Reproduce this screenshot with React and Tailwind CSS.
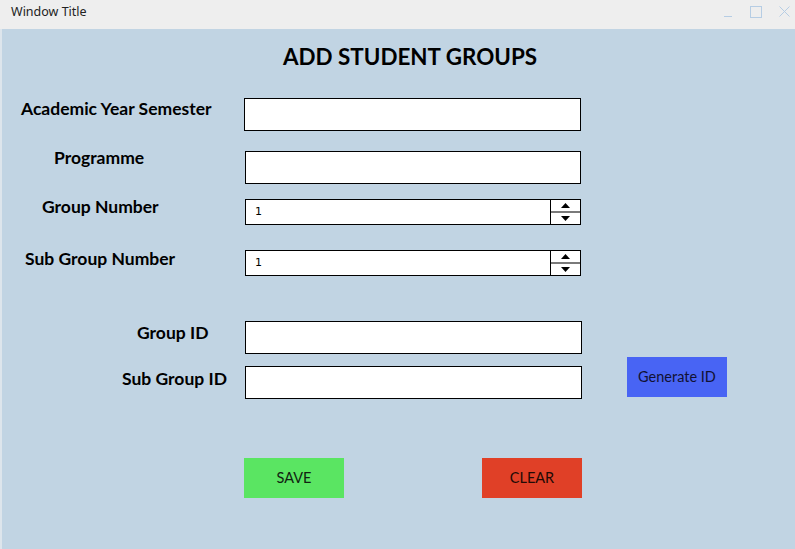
import { useState } from "react";

function Spinner({ value }) {
  return (
    <div className="flex w-[336px] h-[26px] border border-black bg-white">
      <div className="flex-1 pl-[9px] flex items-center text-[11px] font-['DejaVu_Sans',sans-serif] text-black">
        {value}
      </div>
      <div className="w-[30px] border-l border-black flex flex-col">
        <div className="flex-1 flex items-center justify-center border-b-2 border-[#7a7a7a]">
          <svg width="9" height="5" viewBox="0 0 9 5">
            <path d="M0 5 L4.5 0 L9 5 Z" fill="#000" />
          </svg>
        </div>
        <div className="flex-1 flex items-center justify-center">
          <svg width="9" height="5" viewBox="0 0 9 5">
            <path d="M0 0 L9 0 L4.5 5 Z" fill="#000" />
          </svg>
        </div>
      </div>
    </div>
  );
}

function TextBox({ w = "w-[337px]" }) {
  return <div className={`${w} h-[33px] border border-black bg-white`} />;
}

export default function App() {
  const [groupNo] = useState(1);
  const [subGroupNo] = useState(1);

  return (
    <div className="w-[795px] h-[549px] flex flex-col font-['Lato',sans-serif] text-black overflow-hidden">
      {/* Title bar */}
      <div className="h-[29px] bg-[#eeeeee] flex items-start justify-between pl-[11px] pr-[5px] pt-[3px]">
        <span className="text-[12.5px] font-['Noto_Sans',sans-serif] leading-[17px] text-[#222]">Window Title</span>
        <div className="flex items-start gap-[17px] pt-[3px]">
          <svg width="10" height="12" viewBox="0 0 10 12">
            <path d="M1 10.5 H9" stroke="#b6cde4" strokeWidth="1" />
          </svg>
          <svg width="12" height="12" viewBox="0 0 12 12">
            <rect x="0.5" y="0.5" width="11" height="11" fill="none" stroke="#b6cde4" strokeWidth="1" />
          </svg>
          <svg width="11" height="11" viewBox="0 0 11 11">
            <path d="M0.5 0.5 L10.5 10.5 M10.5 0.5 L0.5 10.5" stroke="#b6cde4" strokeWidth="1" />
          </svg>
        </div>
      </div>

      {/* Form */}
      <div className="flex-1 bg-[#c1d4e3] border-l-2 border-[#dde5ec] flex flex-col">
        <div className="h-[69px] pt-[14px] pl-[281px]">
          <h1 className="text-[22.4px] leading-[28px] font-bold">ADD STUDENT GROUPS</h1>
        </div>

        <div className="flex h-[33px]">
          <div className="w-[242px] pl-[19px] mt-[1px] text-[17.5px] leading-[20px] font-bold">Academic Year Semester</div>
          <TextBox />
        </div>

        <div className="flex h-[33px] mt-[20px]">
          <div className="w-[243px] pl-[52px] -mt-[3px] text-[17.5px] leading-[20px] font-bold">Programme</div>
          <TextBox w="w-[336px]" />
        </div>

        <div className="flex h-[26px] mt-[15px]">
          <div className="w-[243px] pl-[40px] -mt-[2px] text-[17.5px] leading-[20px] font-bold">Group Number</div>
          <Spinner value={groupNo} />
        </div>

        <div className="flex h-[26px] mt-[25px]">
          <div className="w-[243px] pl-[23px] -mt-[1px] text-[17.5px] leading-[20px] font-bold">Sub Group Number</div>
          <Spinner value={subGroupNo} />
        </div>

        <div className="flex h-[33px] mt-[45px]">
          <div className="w-[243px] pl-[135px] mt-[2px] text-[17.5px] leading-[20px] font-bold">Group ID</div>
          <TextBox />
        </div>

        <div className="flex h-[33px] mt-[12px]">
          <div className="w-[243px] pl-[120px] mt-[3px] text-[17.5px] leading-[20px] font-bold">Sub Group ID</div>
          <TextBox />
          <button className="ml-[45px] -mt-[9px] w-[100px] h-[40px] bg-[#4864f4] text-[14.5px] text-[#111133]">
            Generate ID
          </button>
        </div>

        <div className="flex mt-[59px] pl-[242px] gap-[138px]">
          <button className="w-[100px] h-[40px] bg-[#5ae562] text-[14.5px] text-[#112211]">SAVE</button>
          <button className="w-[100px] h-[40px] bg-[#e04027] text-[14.5px] text-[#220a05]">CLEAR</button>
        </div>
      </div>
    </div>
  );
}
